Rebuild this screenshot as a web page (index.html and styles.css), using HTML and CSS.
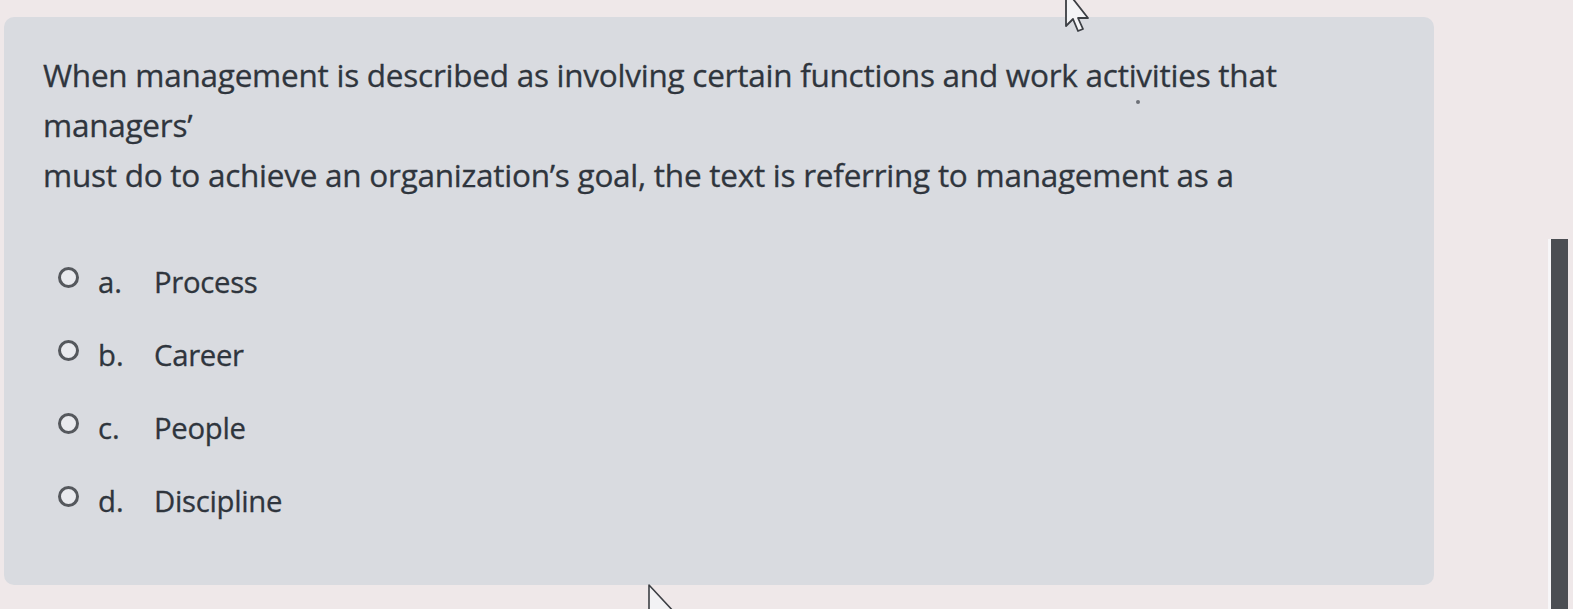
FILE: index.html
```html
<!DOCTYPE html>
<html>
<head>
<meta charset="utf-8">
<link rel="stylesheet" href="styles.css">
</head>
<body>
<div class="screen">
  <div class="panel">
    <p class="question">When management is described as involving certain functions and work activities that managers&#8217;<br>must do to achieve an organization&#8217;s goal, the text is referring to management as a</p>
    <div class="answers">
      <label class="option"><span class="radio"></span><span class="letter">a.</span><span class="label">Process</span></label>
      <label class="option"><span class="radio"></span><span class="letter">b.</span><span class="label">Career</span></label>
      <label class="option"><span class="radio"></span><span class="letter">c.</span><span class="label">People</span></label>
      <label class="option"><span class="radio"></span><span class="letter">d.</span><span class="label">Discipline</span></label>
    </div>
  </div>
  <div class="scroll-track"><div class="scroll-thumb"></div></div>
</div>
<svg class="cursor cursor-top" width="28" height="36" viewBox="0 0 28 36"><path d="M3 -10 L3 26 L10 19 L15 31 L20 29 L15 18 L25 18 Z" fill="#f4f4f6" stroke="#3c3f44" stroke-width="1.8" stroke-linejoin="round"/></svg>
<svg class="cursor cursor-bottom" width="40" height="30" viewBox="0 0 40 30"><path d="M2 2 L2 40 L10 32 L16 44 L21 42 L15 30 L28 30 Z" fill="#f2f2f4" stroke="#3c3f44" stroke-width="1.6" stroke-linejoin="round"/></svg>
<span class="speck"></span>
</body>
</html>
```

FILE: styles.css
```css
html, body {
  margin: 0;
  padding: 0;
}
body {
  width: 1573px;
  height: 609px;
  overflow: hidden;
  background: #efe8e9;
  font-family: "Open Sans", "Noto Sans", sans-serif;
  color: #2f353d;
  position: relative;
}
.screen {
  display: flex;
  align-items: flex-start;
  height: 609px;
}
.panel {
  margin-top: 17px;
  margin-left: 4px;
  width: 1430px;
  height: 568px;
  background: #d9dbe0;
  border-radius: 10px;
  padding: 33px 0 0 39px;
  box-sizing: border-box;
}
.question {
  margin: 0;
  width: 1330px;
  font-size: 31.5px;
  font-weight: 500;
  line-height: 50px;
  letter-spacing: -0.25px;
  -webkit-text-stroke: 0.3px #2f353d;
}
.answers {
  display: flex;
  flex-direction: column;
  margin-top: 62px;
  padding-left: 16px;
  gap: 33px;
}
.option {
  display: flex;
  align-items: center;
  height: 40px;
  font-size: 29.3px;
  font-weight: 500;
  -webkit-text-stroke: 0.3px #2f353d;
}
.radio {
  width: 15px;
  height: 15px;
  border: 3.5px solid #55585d;
  border-radius: 50%;
  background: #e9eaee;
  margin-top: -10px;
  margin-left: -1px;
}
.letter {
  width: 56px;
  margin-left: 19px;
}
.label {
  letter-spacing: -0.3px;
}
.scroll-track {
  margin-left: 114px;
  margin-top: 239px;
  width: 20px;
  height: 370px;
  display: flex;
}
.scroll-thumb {
  width: 17px;
  height: 100%;
  background: #4b4e53;
  border-left: 3px solid #f7f6f8;
}
.cursor {
  position: absolute;
}
.cursor-top {
  left: 1063px;
  top: 0;
}
.cursor-bottom {
  left: 647px;
  top: 583px;
}
.speck {
  position: absolute;
  left: 1136px;
  top: 100px;
  width: 4px;
  height: 4px;
  border-radius: 50%;
  background: #6d7077;
}
```
